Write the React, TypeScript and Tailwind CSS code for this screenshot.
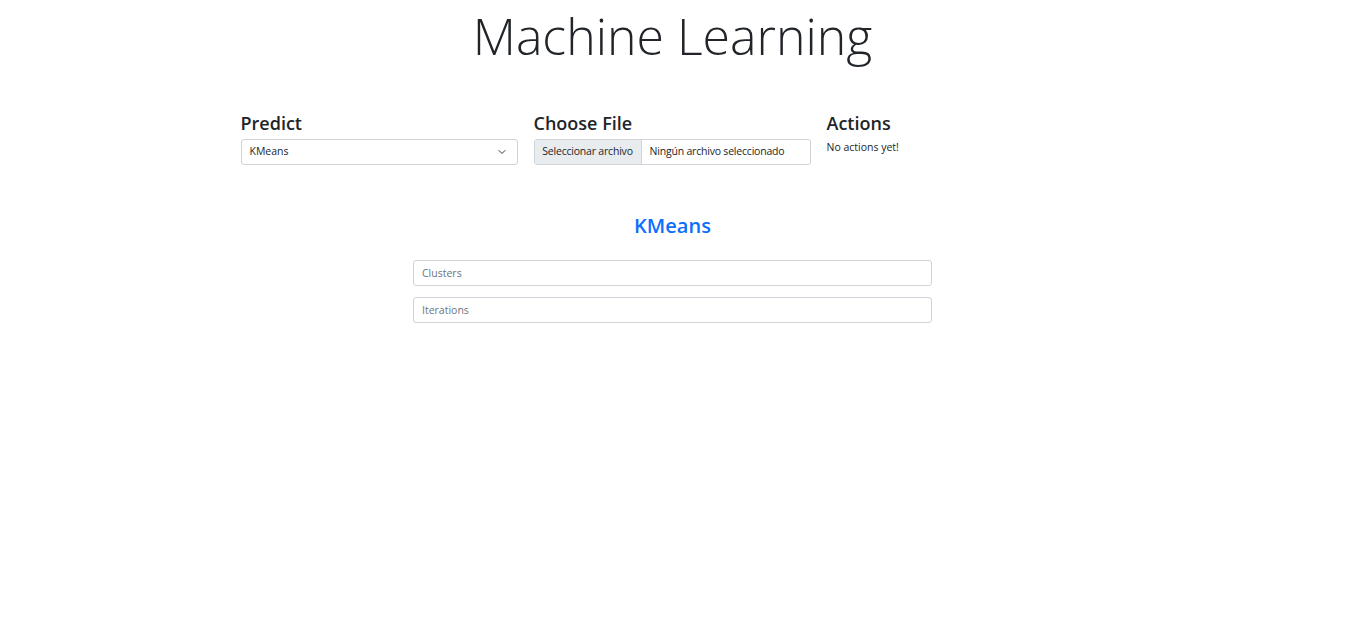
export default function App() {
  return (
    <div className="min-h-[620px] w-full bg-white text-[#212529]" style={{ fontFamily: '"Open Sans", "Noto Sans", sans-serif' }}>
      <h1 className="pt-[3px] text-center text-[50px] font-light leading-[66px] text-[#212529]">Machine Learning</h1>
      <div className="mx-auto mt-[42px] flex w-[864px] gap-[16px]">
        <div className="w-[277px]">
          <h5 className="text-[18px] font-semibold leading-[24px]">Predict</h5>
          <div className="mt-[4px] flex h-[26px] items-center justify-between rounded-[3px] border border-[#ced4da] pl-[8px] pr-[10px] text-[10.5px]">
            <span className="whitespace-nowrap">KMeans</span>
            <svg width="10" height="8" viewBox="0 0 16 16" fill="none" stroke="#343a40" strokeWidth="2" strokeLinecap="round" strokeLinejoin="round">
              <path d="M2 5l6 6 6-6" />
            </svg>
          </div>
        </div>
        <div className="w-[277px]">
          <h5 className="text-[18px] font-semibold leading-[24px]">Choose File</h5>
          <div className="mt-[4px] flex h-[26px] items-center overflow-hidden rounded-[3px] border border-[#ced4da] text-[10.5px]">
            <span className="flex h-full w-[107px] shrink-0 items-center justify-center whitespace-nowrap border-r border-[#ced4da] bg-[#e9ecef] tracking-[-0.2px]">Seleccionar archivo</span>
            <span className="whitespace-nowrap px-[8px] tracking-[-0.2px]">Ningún archivo seleccionado</span>
          </div>
        </div>
        <div className="w-[277px]">
          <h5 className="text-[18px] font-semibold leading-[24px]">Actions</h5>
          <p className="mt-[4px] whitespace-nowrap text-[10.5px] leading-[16px]">No actions yet!</p>
        </div>
      </div>
      <h4 className="mt-[48px] text-center text-[20px] font-semibold leading-[26px] text-[#0d6efd]">KMeans</h4>
      <div className="mx-auto mt-[21px] flex w-[519px] flex-col gap-[11px]">
        <input placeholder="Clusters" className="h-[26px] rounded-[3px] border border-[#ced4da] px-[8px] text-[10.5px] placeholder:text-[#6c757d] outline-none" />
        <input placeholder="Iterations" className="h-[26px] rounded-[3px] border border-[#ced4da] px-[8px] text-[10.5px] placeholder:text-[#6c757d] outline-none" />
      </div>
    </div>
  );
}
